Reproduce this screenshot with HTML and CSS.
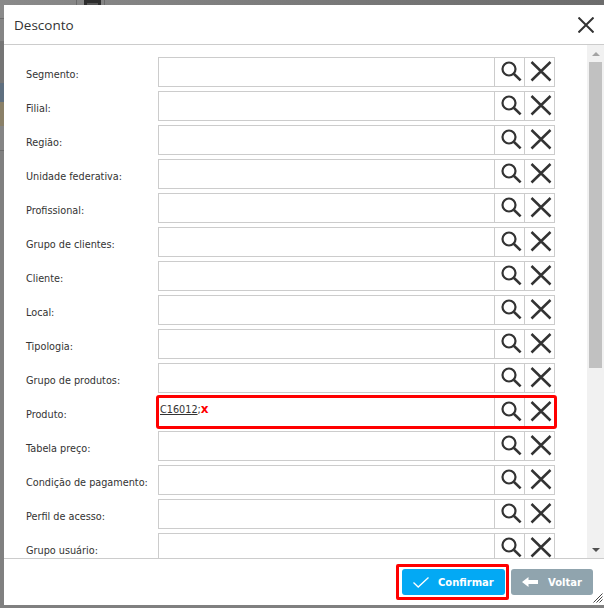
FILE: index.html
```html
<!DOCTYPE html>
<html lang="pt">

<head>
    <meta charset="UTF-8">
    <title>Desconto</title>
    <link rel="stylesheet" href="styles.css">
</head>

<body>
    <svg class="defs" width="0" height="0">
        <symbol id="i-search" viewBox="0 0 30 28">
            <circle cx="14" cy="11" r="6.5" fill="none" stroke="#333" stroke-width="2.2" />
            <path d="M18.8 15.8 25.6 22.4" fill="none" stroke="#333" stroke-width="2.6" />
        </symbol>
        <symbol id="i-clear" viewBox="0 0 30 28">
            <path d="M6.5 4 25.5 22.5M25.5 4 6.5 22.5" fill="none" stroke="#333" stroke-width="2.5" />
        </symbol>
    </svg>

    <!-- page behind the modal -->
    <div class="top-strip">
        <div class="top-tool"><span class="top-icon"></span></div>
    </div>
    <div class="left-strip">
        <span class="ls ls1"></span>
        <span class="ls ls2"></span>
        <span class="ls ls3"></span>
        <span class="ls ls4"></span>
        <span class="ls ls5"></span>
        <span class="ls ls6"></span>
        <span class="ls ls7"></span>
    </div>

    <div class="dialog">
        <div class="dialog-head">
            <span class="dialog-title">Desconto</span>
            <svg class="dialog-close" width="16" height="16" viewBox="0 0 16 16">
                <path d="M.5.5 15.5 15.5M15.5.5.5 15.5" fill="none" stroke="#333" stroke-width="2" />
            </svg>
        </div>

        <div class="dialog-body">
            <div class="form">
                <div class="row"><label class="lbl">Segmento:</label><div class="line"><div class="field"></div><button class="cell"><svg class="ico"><use href="#i-search" /></svg></button><button class="cell"><svg class="ico"><use href="#i-clear" /></svg></button></div></div>
                <div class="row"><label class="lbl">Filial:</label><div class="line"><div class="field"></div><button class="cell"><svg class="ico"><use href="#i-search" /></svg></button><button class="cell"><svg class="ico"><use href="#i-clear" /></svg></button></div></div>
                <div class="row"><label class="lbl">Região:</label><div class="line"><div class="field"></div><button class="cell"><svg class="ico"><use href="#i-search" /></svg></button><button class="cell"><svg class="ico"><use href="#i-clear" /></svg></button></div></div>
                <div class="row"><label class="lbl">Unidade federativa:</label><div class="line"><div class="field"></div><button class="cell"><svg class="ico"><use href="#i-search" /></svg></button><button class="cell"><svg class="ico"><use href="#i-clear" /></svg></button></div></div>
                <div class="row"><label class="lbl">Profissional:</label><div class="line"><div class="field"></div><button class="cell"><svg class="ico"><use href="#i-search" /></svg></button><button class="cell"><svg class="ico"><use href="#i-clear" /></svg></button></div></div>
                <div class="row"><label class="lbl">Grupo de clientes:</label><div class="line"><div class="field"></div><button class="cell"><svg class="ico"><use href="#i-search" /></svg></button><button class="cell"><svg class="ico"><use href="#i-clear" /></svg></button></div></div>
                <div class="row"><label class="lbl">Cliente:</label><div class="line"><div class="field"></div><button class="cell"><svg class="ico"><use href="#i-search" /></svg></button><button class="cell"><svg class="ico"><use href="#i-clear" /></svg></button></div></div>
                <div class="row"><label class="lbl">Local:</label><div class="line"><div class="field"></div><button class="cell"><svg class="ico"><use href="#i-search" /></svg></button><button class="cell"><svg class="ico"><use href="#i-clear" /></svg></button></div></div>
                <div class="row"><label class="lbl">Tipologia:</label><div class="line"><div class="field"></div><button class="cell"><svg class="ico"><use href="#i-search" /></svg></button><button class="cell"><svg class="ico"><use href="#i-clear" /></svg></button></div></div>
                <div class="row"><label class="lbl">Grupo de produtos:</label><div class="line"><div class="field"></div><button class="cell"><svg class="ico"><use href="#i-search" /></svg></button><button class="cell"><svg class="ico"><use href="#i-clear" /></svg></button></div></div>
                <div class="row"><label class="lbl">Produto:</label><div class="line marked"><div class="field"><a class="tag">C16012</a>;<b class="tag-x">x</b></div><button class="cell"><svg class="ico"><use href="#i-search" /></svg></button><button class="cell"><svg class="ico"><use href="#i-clear" /></svg></button></div></div>
                <div class="row"><label class="lbl">Tabela preço:</label><div class="line"><div class="field"></div><button class="cell"><svg class="ico"><use href="#i-search" /></svg></button><button class="cell"><svg class="ico"><use href="#i-clear" /></svg></button></div></div>
                <div class="row"><label class="lbl">Condição de pagamento:</label><div class="line"><div class="field"></div><button class="cell"><svg class="ico"><use href="#i-search" /></svg></button><button class="cell"><svg class="ico"><use href="#i-clear" /></svg></button></div></div>
                <div class="row"><label class="lbl">Perfil de acesso:</label><div class="line"><div class="field"></div><button class="cell"><svg class="ico"><use href="#i-search" /></svg></button><button class="cell"><svg class="ico"><use href="#i-clear" /></svg></button></div></div>
                <div class="row"><label class="lbl">Grupo usuário:</label><div class="line"><div class="field"></div><button class="cell"><svg class="ico"><use href="#i-search" /></svg></button><button class="cell"><svg class="ico"><use href="#i-clear" /></svg></button></div></div>
            </div>
            <div class="scroll">
                <span class="scroll-btn"><i class="arrow-up"></i></span>
                <div class="scroll-track"><div class="scroll-thumb"></div></div>
                <span class="scroll-btn"><i class="arrow-down"></i></span>
            </div>
        </div>

        <div class="dialog-foot">
            <div class="marked-btn">
                <button class="btn btn-ok">
                    <svg width="16" height="11" viewBox="0 0 16 11"><path d="M.5 5.5 5.2 10 15.5.5" fill="none" stroke="#fff" stroke-width="1.3" /></svg>
                    Confirmar
                </button>
            </div>
            <button class="btn btn-back">
                <svg width="16" height="10" viewBox="0 0 16 10"><path d="M0 5 6.5 0V3H16V7H6.5V10Z" fill="#fff" /></svg>
                Voltar
            </button>
        </div>

        <svg class="grip" width="10" height="10" viewBox="0 0 10 10">
            <path d="M9.5 .5 .5 9.5M9.5 3.5 3.5 9.5M9.5 6.5 6.5 9.5" fill="none" stroke="#444" stroke-width="1" />
        </svg>
    </div>
</body>

</html>
```

FILE: styles.css
```css
* {
    box-sizing: border-box;
}

html,
body {
    height: 100%;
}

body {
    margin: 0;
    display: grid;
    grid-template-columns: 4px 1fr;
    grid-template-rows: 5px 1fr 3px;
    background-color: #808080;
    font-family: "DejaVu Sans", sans-serif;
    color: #333;
    overflow: hidden;
}

.defs {
    position: absolute;
}

/* what shows of the page behind */
.top-strip {
    grid-column: 1 / 3;
    grid-row: 1;
    padding-left: 76px;
    background: linear-gradient(to right, #8a8a8a, #777 60%, #6c6c6c);
}

.top-tool {
    width: 29px;
    height: 5px;
    padding-left: 7px;
    border-left: 1px solid #6a6a6a;
    border-right: 1px solid #6a6a6a;
}

.top-icon {
    display: block;
    width: 17px;
    height: 5px;
    background-color: #555;
    border: 3px solid #2d2d2d;
    border-bottom: 0;
}

.left-strip {
    grid-column: 1;
    grid-row: 2 / 4;
    display: flex;
    flex-direction: column;
}

.ls {
    display: block;
}

.ls1 {
    height: 14px;
    background-color: #8a8a8a;
    border-bottom: 1px solid #6c6c6c;
}

.ls2 {
    height: 22px;
    background-color: #858585;
}

.ls3 {
    height: 42px;
    background-color: #757575;
}

.ls4 {
    height: 19px;
    background-color: #5f6f7f;
}

.ls5 {
    height: 24px;
    background-color: #8a8068;
}

.ls6 {
    height: 25px;
    background-color: #858585;
    border-bottom: 1px solid #6c6c6c;
}

.ls7 {
    flex: 1;
    background-color: #808080;
}

/* modal */
.dialog {
    grid-column: 2;
    grid-row: 2;
    position: relative;
    display: flex;
    flex-direction: column;
    min-height: 0;
    background-color: #fff;
}

.dialog-head {
    display: flex;
    align-items: center;
    justify-content: space-between;
    height: 40px;
    padding: 0 10px;
    border-bottom: 1px solid #ccc;
}

.dialog-title {
    font-family: "Open Sans", sans-serif;
    font-size: 13.5px;
    color: #333;
}

.dialog-body {
    display: flex;
    height: 514px;
    border-bottom: 1px solid #ccc;
}

.form {
    flex: 1;
    min-width: 0;
    overflow: hidden;
    padding: 12px 0 0 22px;
}

.row {
    display: flex;
    align-items: center;
    height: 30px;
    margin-bottom: 4px;
}

.lbl {
    width: 132px;
    padding-top: 4px;
    font-size: 9.7px;
    color: #333;
}

.line {
    display: flex;
    width: 397px;
    height: 30px;
}

.line.marked {
    outline: 3px solid #f00;
    outline-offset: -1px;
    border-radius: 1px;
}

.field {
    flex: 1;
    padding: 4px 1px;
    border: 1px solid #ccc;
    font-size: 9.7px;
    line-height: 14px;
}

.tag {
    text-decoration: underline;
}

.tag-x {
    color: #f00;
    font-size: 12px;
}

.cell {
    width: 30px;
    padding: 0;
    border: 1px solid #ccc;
    border-left: 0;
    background-color: #fff;
}

.ico {
    display: block;
    width: 30px;
    height: 28px;
}

/* fake scrollbar, the list never moves */
.scroll {
    display: flex;
    flex-direction: column;
    flex-shrink: 0;
    width: 17px;
    background-color: #f1f1f1;
}

.scroll-btn {
    display: flex;
    align-items: center;
    justify-content: center;
    height: 17px;
}

.arrow-up {
    border-left: 4px solid transparent;
    border-right: 4px solid transparent;
    border-bottom: 4px solid #a3a3a3;
}

.arrow-down {
    border-left: 4px solid transparent;
    border-right: 4px solid transparent;
    border-top: 4px solid #505050;
}

.scroll-track {
    flex: 1;
    padding: 0 2px;
}

.scroll-thumb {
    height: 306px;
    background-color: #c1c1c1;
}

.dialog-foot {
    flex: 1;
    display: flex;
    align-items: center;
    justify-content: flex-end;
    gap: 2px;
    padding-right: 11px;
}

.marked-btn {
    padding: 2px 1px 2px 3px;
    border: 3px solid #f00;
    border-radius: 2px;
}

.btn {
    display: flex;
    align-items: center;
    height: 26px;
    border: 0;
    border-radius: 3px;
    font-family: "DejaVu Sans", sans-serif;
    font-size: 10px;
    font-weight: bold;
    color: #fff;
}

.btn-ok {
    width: 103px;
    gap: 9px;
    padding: 0 0 0 11px;
    background-color: #03a9f4;
}

.btn-back {
    width: 82px;
    gap: 10px;
    padding: 0 0 0 11px;
    background-color: #90a4ae;
}

.grip {
    position: absolute;
    right: 1px;
    bottom: 2px;
}
```
